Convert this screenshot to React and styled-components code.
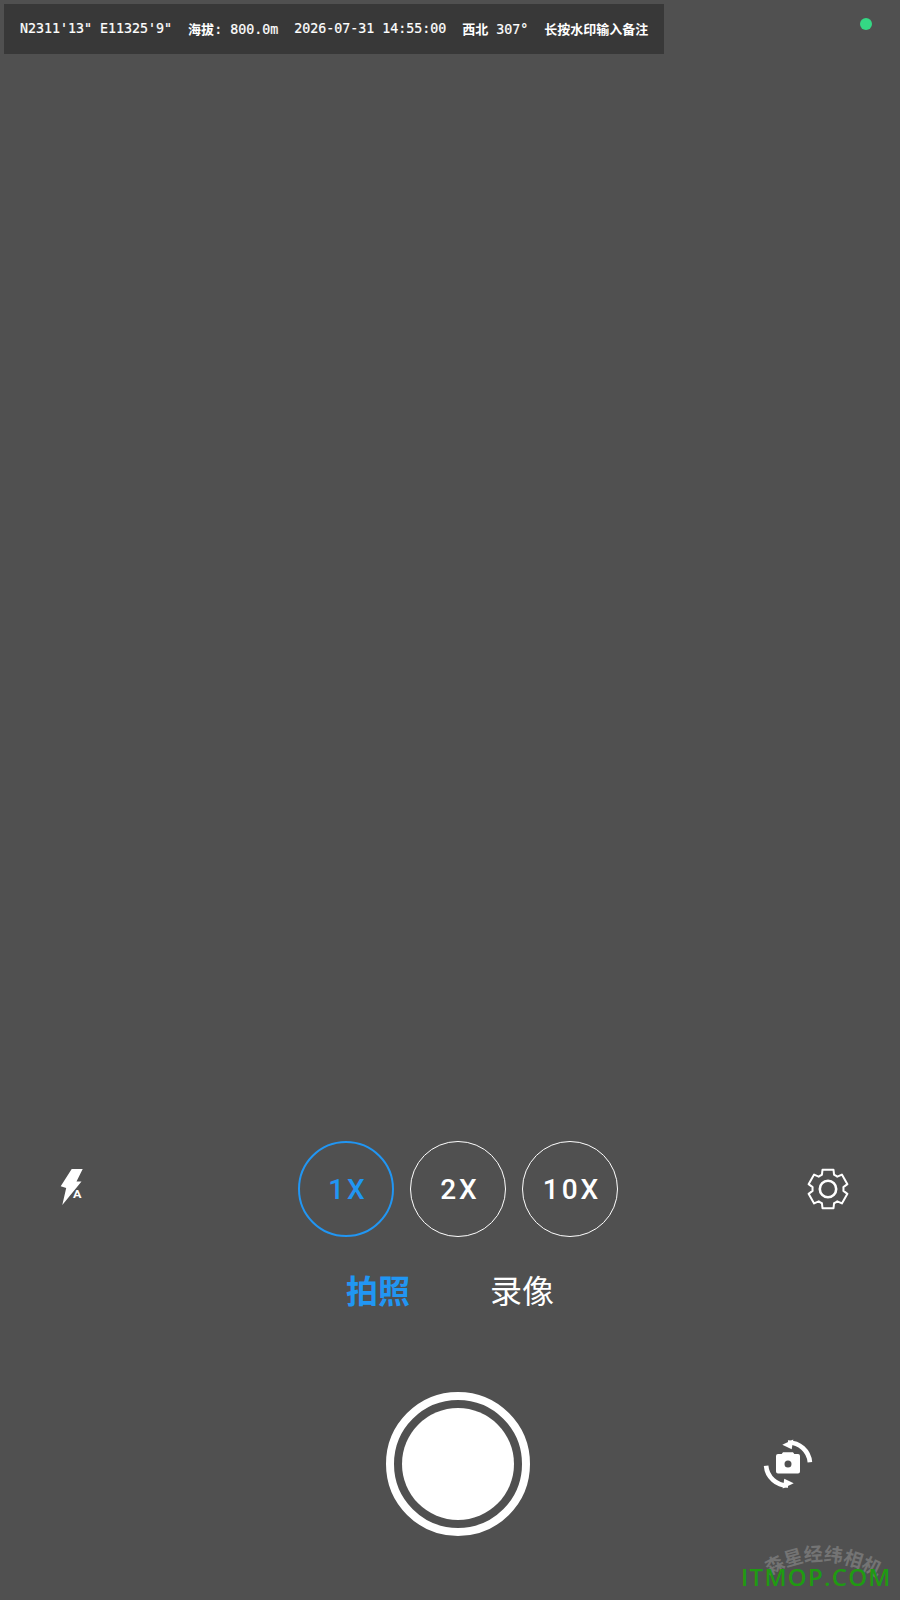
import React from "react";
import styled, { createGlobalStyle } from "styled-components";

const Global = createGlobalStyle`
  html, body { margin: 0; padding: 0; background: #505050; }
  body { font-family: "Roboto", "Noto Sans CJK SC", sans-serif; overflow: hidden; }
`;

const Page = styled.div`
  position: relative;
  width: 900px;
  height: 1600px;
  background: #505050;
  color: #fff;
  display: flex;
  flex-direction: column;
  overflow: hidden;
`;

const TopRow = styled.div`
  display: flex;
  align-items: flex-start;
  justify-content: space-between;
  padding: 4px 28px 0 4px;
`;

const Stamp = styled.div`
  display: flex;
  align-items: center;
  gap: 16px;
  height: 50px;
  padding: 0 16px;
  background: #383838;
  font: 500 13.3px/18px "DejaVu Sans Mono", "Noto Sans CJK SC", monospace;
  white-space: nowrap;
  -webkit-text-stroke: 0.2px #fff;
`;

const Han = styled.span`
  font-family: "Noto Sans CJK SC", sans-serif;
  font-size: 13px;
  font-weight: 700;
  line-height: 18px;
  -webkit-text-stroke: 0;
`;

const StatusDot = styled.span`
  width: 12px;
  height: 12px;
  margin-top: 14px;
  border-radius: 50%;
  background: #34d884;
`;

const Controls = styled.div`
  margin-top: auto;
  display: flex;
  flex-direction: column;
  padding-bottom: 64px;
`;

const ZoomRow = styled.div`
  display: grid;
  grid-template-columns: 1fr auto 1fr;
  align-items: center;
  padding-left: 16px;
`;

const FlashCell = styled.div`
  display: flex;
  padding: 0 0 6px 44px;
`;

const GearCell = styled.div`
  display: flex;
  justify-content: flex-end;
  padding-right: 50px;
`;

const ZoomGroup = styled.div`
  display: flex;
  gap: 16px;
`;

const ZoomButton = styled.div`
  width: 96px;
  height: 96px;
  box-sizing: border-box;
  border-radius: 50%;
  border: ${(p) => (p.$active ? "2px solid #2196f3" : "1px solid #fff")};
  color: ${(p) => (p.$active ? "#2196f3" : "#fff")};
  display: flex;
  align-items: center;
  justify-content: center;
  padding-left: 4px;
  font: 500 28px "Roboto", sans-serif;
  letter-spacing: 3px;
`;

const Tabs = styled.div`
  display: flex;
  justify-content: center;
  gap: 80px;
  margin-top: 28px;
`;

const Tab = styled.div`
  font: ${(p) => (p.$active ? 700 : 400)} 32px/48px "Noto Sans CJK SC", sans-serif;
  color: ${(p) => (p.$active ? "#2196f3" : "#fff")};
`;

const ShutterRow = styled.div`
  display: grid;
  grid-template-columns: 1fr auto 1fr;
  align-items: center;
  margin-top: 79px;
  padding-left: 16px;
`;

const Shutter = styled.div`
  width: 144px;
  height: 144px;
  box-sizing: border-box;
  border-radius: 50%;
  border: 8px solid #fff;
  padding: 8px;
`;

const ShutterCore = styled.div`
  width: 100%;
  height: 100%;
  border-radius: 50%;
  background: #fff;
`;

const FlipCell = styled.div`
  display: flex;
  padding-left: 233px;
`;

const Watermark = styled.div`
  position: absolute;
  left: 720px;
  top: 1530px;
  width: 180px;
  height: 70px;
`;

const ArcText = styled.svg`
  position: absolute;
  inset: 0;
  font: 700 19px "Noto Sans CJK SC", sans-serif;
  fill: #747474;
`;

const SiteMark = styled.div`
  position: absolute;
  left: 21px;
  top: 32px;
  font: 600 24px/30px "Open Sans", sans-serif;
  letter-spacing: 1.25px;
  color: #1f9a12;
  white-space: nowrap;
`;

const FlashIcon = () => (
  <svg width="40" height="44" viewBox="0 0 40 44" fill="#fff">
    <path d="M11.7 5H22.7L16.5 17.5H21.5L2.3 41L6.2 24L.7 22.2Z" />
    <text x="13" y="34" fontSize="10.5" fontWeight="700" fontFamily="Roboto, sans-serif" textLength="8.5" lengthAdjust="spacingAndGlyphs">A</text>
  </svg>
);

const polar = (r, deg) => {
  const a = ((deg - 90) * Math.PI) / 180;
  return `${(r * Math.cos(a)).toFixed(2)} ${(r * Math.sin(a)).toFixed(2)}`;
};

const gearPath = () => {
  let d = "";
  for (let i = 0; i < 6; i++) {
    const a = i * 60;
    d += `${i === 0 ? "M" : "L"}${polar(15.5, a - 23)} L${polar(20, a - 16)} L${polar(20, a + 16)} L${polar(15.5, a + 23)} `;
    d += `A15.5 15.5 0 0 1 ${polar(15.5, a + 37)} `;
  }
  return d + "Z";
};

const GearIcon = () => (
  <svg width="44" height="44" viewBox="-22 -22 44 44" fill="none" stroke="#fff" strokeWidth="2" strokeLinejoin="round">
    <path d={gearPath()} />
    <circle r="8.2" strokeWidth="2.6" />
  </svg>
);

const FlipArc = ({ turn }) => (
  <g transform={turn ? "rotate(180)" : undefined}>
    <path d="M0-21.5A21.5 21.5 0 0 1 21.9-1.7" fill="none" stroke="#fff" strokeWidth="4.6" />
    <path d="M-5.7-19.3L5.3-24.5L3.7-14.8Z" fill="#fff" />
  </g>
);

const FlipIcon = () => (
  <svg width="50" height="52" viewBox="-25 -26 50 52">
    <path
      d="M-10-10H-6.3L-5-11.7H5L6.3-10H10A2 2 0 0 1 12-8V7.5A2 2 0 0 1 10 9.5H-10A2 2 0 0 1 -12 7.5V-8A2 2 0 0 1 -10-10ZM0 3.5A3.5 3.5 0 1 0 0-3.5A3.5 3.5 0 1 0 0 3.5Z"
      fill="#fff"
      fillRule="evenodd"
    />
    <FlipArc />
    <FlipArc turn />
  </svg>
);

export default function App() {
  return (
    <Page>
      <Global />
      <TopRow>
        <Stamp>
          <span>N2311'13" E11325'9"</span>
          <span><Han>海拔</Han>: 800.0m</span>
          <span>2026-07-31 14:55:00</span>
          <span><Han>西北</Han> 307°</span>
          <Han>长按水印输入备注</Han>
        </Stamp>
        <StatusDot />
      </TopRow>
      <Controls>
        <ZoomRow>
          <FlashCell><FlashIcon /></FlashCell>
          <ZoomGroup>
            <ZoomButton $active>1X</ZoomButton>
            <ZoomButton>2X</ZoomButton>
            <ZoomButton>10X</ZoomButton>
          </ZoomGroup>
          <GearCell><GearIcon /></GearCell>
        </ZoomRow>
        <Tabs>
          <Tab $active>拍照</Tab>
          <Tab>录像</Tab>
        </Tabs>
        <ShutterRow>
          <span />
          <Shutter><ShutterCore /></Shutter>
          <FlipCell><FlipIcon /></FlipCell>
        </ShutterRow>
      </Controls>
      <Watermark>
        <ArcText viewBox="0 0 180 70">
          <path id="wm-arc" d="M49 46Q102 14 162 50" fill="none" />
          <text><textPath href="#wm-arc">森星经纬相机</textPath></text>
        </ArcText>
        <SiteMark>ITMOP.COM</SiteMark>
      </Watermark>
    </Page>
  );
}
